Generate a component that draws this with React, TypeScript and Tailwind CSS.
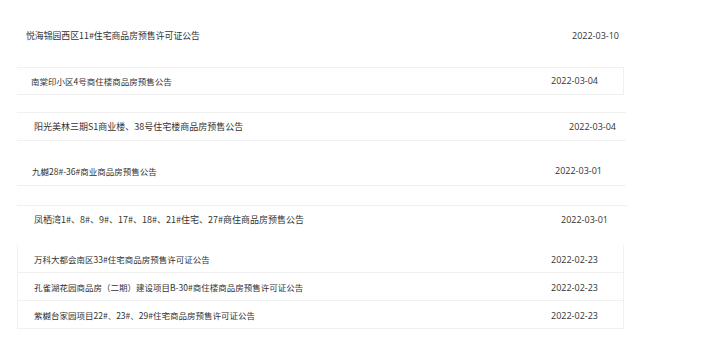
const cjk = "font-['Noto_Sans_CJK_SC','Open_Sans',sans-serif]";
const latin = "font-['Open_Sans','Noto_Sans_CJK_SC',sans-serif] text-[9px]";

const Line = ({ title, date, size = "text-[9px]" }: { title: string; date: string; size?: string }) => (
  <>
    <span className={`truncate ${cjk} ${size}`}>{title}</span>
    <span className={`shrink-0 ${latin}`}>{date}</span>
  </>
);

export default function App() {
  return (
    <div className="min-h-[340px] w-[711px] bg-white text-[#333]">
      <div className="ml-[17px] flex flex-col">
        {/* row 1 */}
        <div className="h-[67px] w-[607px] pt-[26px]">
          <div className="flex h-[20px] items-center justify-between pl-[9px] pr-[5px]">
            <Line title="悦海锦园西区11#住宅商品房预售许可证公告" date="2022-03-10" size="text-[8.85px]" />
          </div>
        </div>

        {/* row 2 */}
        <div className="flex h-[28px] w-[607px] items-center justify-between border-y border-r border-[#f0f0f0] pl-[14px] pr-[25px]">
          <Line title="南棠印小区4号商住楼商品房预售公告" date="2022-03-04" size="text-[8.5px]" />
        </div>

        {/* row 3 */}
        <div className="mt-[17px] flex h-[29px] w-[609px] items-center justify-between border-y border-[#f0f0f0] pl-[17px] pr-[10px]">
          <Line title="阳光美林三期S1商业楼、38号住宅楼商品房预售公告" date="2022-03-04" />
        </div>

        {/* row 4 */}
        <div className="h-[45px] w-[609px] border-b border-[#f0f0f0] pt-[20px]">
          <div className="flex h-[20px] items-center justify-between pl-[15px] pr-[24px]">
            <Line title="九樾28#-36#商业商品房预售公告" date="2022-03-01" size="text-[8.5px]" />
          </div>
        </div>

        {/* row 5 */}
        <div className="mt-[19px] h-[40px] w-[610px] border-t border-[#f0f0f0] pt-[4px]">
          <div className="flex h-[20px] items-center justify-between pl-[17px] pr-[19px]">
            <Line title="凤栖湾1#、8#、9#、17#、18#、21#住宅、27#商住商品房预售公告" date="2022-03-01" />
          </div>
        </div>

        {/* rows 6-8 */}
        <div className="w-[607px] border-x border-[#f0f0f0]">
          {[
            ["万科大都会南区33#住宅商品房预售许可证公告", "2022-02-23"],
            ["孔雀湖花园商品房（二期）建设项目B-30#商住楼商品房预售许可证公告", "2022-02-23"],
            ["紫樾台家园项目22#、23#、29#住宅商品房预售许可证公告", "2022-02-23"],
          ].map(([t, d]) => (
            <div
              key={t}
              className="flex h-[28px] items-center justify-between border-b border-[#f0f0f0] pl-[16px] pr-[25px] pt-[2px]"
            >
              <Line title={t} date={d} size="text-[8.5px]" />
            </div>
          ))}
        </div>
      </div>
    </div>
  );
}
